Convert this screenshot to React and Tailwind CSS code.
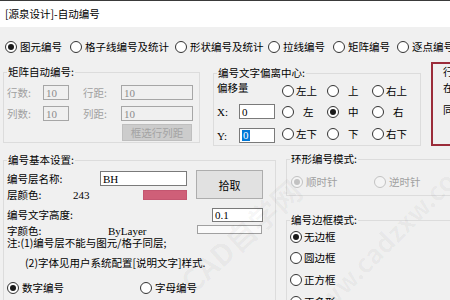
import React from 'react';

// Win10-style dialog: 自动编号
const Radio = ({ checked, disabled }) => (
  <span
    className={`w-[12px] h-[12px] rounded-full border flex items-center justify-center shrink-0 ${
      disabled ? 'border-[#c2c2c2] bg-[#f4f4f4]' : 'border-[#333333] bg-white'
    }`}
  >
    {checked && (
      <span className={`w-[6px] h-[6px] rounded-full ${disabled ? 'bg-[#c2c2c2]' : 'bg-[#1a1a1a]'}`} />
    )}
  </span>
);

const Opt = ({ w, checked, disabled, label, gap = 'gap-[3px]' }) => (
  <div className={`${w} flex items-center ${gap} shrink-0 whitespace-nowrap`}>
    <Radio checked={checked} disabled={disabled} />
    <span className={disabled ? 'text-[#a0a0a0]' : ''}>{label}</span>
  </div>
);

const DisInput = ({ w, v }) => (
  <div className={`${w} h-full border border-[#a6a6a6] bg-[#f0f0f0] pl-[2px] flex items-center font-['Liberation_Serif',serif] text-[11px] text-[#8c8c8c]`}>
    {v}
  </div>
);

const Input = ({ w, children }) => (
  <div className={`${w} h-full border border-[#7a7a7a] bg-white pl-[2px] flex items-center font-['Liberation_Serif',serif] text-[11px] text-black`}>
    {children}
  </div>
);

const Cell = ({ checked, label, wide }) => (
  <div className="w-[45px] flex items-center shrink-0 whitespace-nowrap">
    <Radio checked={checked} />
    <span className={wide ? 'ml-[2px]' : 'ml-[9px]'}>{label}</span>
  </div>
);

export default function App() {
  return (
    <div className="relative w-[450px] h-[300px] overflow-hidden bg-[#f0f0f0] text-black text-[10.5px] leading-[14px] font-['Noto_Sans_CJK_SC',sans-serif]">
      <div className="h-px bg-[#3a3a3a]" />
      <div className="h-[26px] bg-white flex items-center pl-[5px] text-[10.5px]">[源泉设计]-自动编号</div>

      {/* numbering type */}
      <div className="flex items-center h-[14px] mt-[13px] pl-[5px]">
        <Opt w="w-[65px]" checked label="图元编号" />
        <Opt w="w-[105px]" label="格子线编号及统计" />
        <Opt w="w-[93px]" label="形状编号及统计" />
        <Opt w="w-[65px]" label="拉线编号" />
        <Opt w="w-[64px]" label="矩阵编号" />
        <Opt w="w-[60px]" label="逐点编号" />
      </div>

      {/* row 1 */}
      <div className="flex items-start mt-[8px]">
        <fieldset className="ml-[3px] mt-[3px] w-[197px] h-[78px] border border-[#dcdcdc] px-[3px] shrink-0">
          <legend className="px-[1px] leading-[14px]">矩阵自动编号:</legend>
          <div className="flex items-center h-[15px] mt-[6px] text-[#a0a0a0]">
            <span className="w-[36px]">行数:</span>
            <DisInput w="w-[26px]" v="10" />
            <span className="w-[38px] ml-[14px]">行距:</span>
            <DisInput w="w-[72px]" v="10" />
          </div>
          <div className="flex items-center h-[15px] mt-[6px] text-[#a0a0a0]">
            <span className="w-[36px]">列数:</span>
            <DisInput w="w-[26px]" v="10" />
            <span className="w-[38px] ml-[14px]">列距:</span>
            <DisInput w="w-[72px]" v="10" />
          </div>
          <div className="ml-[115px] mt-[3px] w-[70px] h-[17px] bg-[#cccccc] border border-[#bfbfbf] text-[#a3a3a3] flex items-center justify-center">
            框选行列距
          </div>
        </fieldset>

        <fieldset className="ml-[13px] mt-[4px] w-[204px] h-[80px] border border-[#dcdcdc] px-[3px] shrink-0">
          <legend className="px-[1px] leading-[14px]">编号文字偏离中心:</legend>
          <div className="flex">
            <div className="w-[65px] flex flex-col">
              <div className="h-[16px] leading-[16px]">偏移量</div>
              <div className="flex items-center h-[15px] mt-[8px]">
                <span className="w-[22px] font-['Liberation_Serif',serif] text-[11px]">X:</span>
                <Input w="w-[36px]">0</Input>
              </div>
              <div className="flex items-center h-[15px] mt-[9px]">
                <span className="w-[22px] font-['Liberation_Serif',serif] text-[11px]">Y:</span>
                <Input w="w-[36px]">
                  <span className="bg-[#0078d7] text-white px-px leading-[11px]">0</span>
                </Input>
              </div>
            </div>
            <div className="flex flex-col">
              <div className="flex h-[14px] mt-[4px]">
                <Cell wide label="左上" />
                <Cell label="上" />
                <Cell wide label="右上" />
              </div>
              <div className="flex h-[14px] mt-[7px]">
                <Cell label="左" />
                <Cell checked label="中" />
                <Cell label="右" />
              </div>
              <div className="flex h-[14px] mt-[8px]">
                <Cell wide label="左下" />
                <Cell label="下" />
                <Cell wide label="右下" />
              </div>
            </div>
          </div>
        </fieldset>

        <div className="ml-[10px] w-[60px] h-[84px] border-2 border-[#9b2c3a] pl-[10px] leading-[16px] shrink-0">
          <div>行</div>
          <div>在</div>
          <div className="mt-[6px]">同</div>
        </div>
      </div>

      {/* row 2 */}
      <div className="flex items-start mt-[6px]">
        <fieldset className="ml-[3px] mt-[1px] w-[273px] h-[160px] border border-[#dcdcdc] px-[3px] shrink-0">
          <legend className="px-[1px] leading-[14px]">编号基本设置:</legend>
          <div className="flex mt-[3px]">
            <div className="pt-[1px] flex flex-col">
              <div className="flex items-center h-[15px]">
                <span className="w-[93px]">编号层名称:</span>
                <Input w="w-[87px]">BH</Input>
              </div>
              <div className="flex items-center h-[14px] mt-[2px]">
                <span className="w-[66px]">层颜色:</span>
                <span className="w-[70px] font-['Liberation_Serif',serif] text-[11px]">243</span>
                <span className="w-[44px] h-[10px] bg-[#cf5f78] border border-[#c45670]" />
              </div>
            </div>
            <div className="ml-[9px] w-[67px] h-[29px] bg-[#e1e1e1] border border-[#adadad] flex items-center justify-center text-[11px]">
              拾取
            </div>
          </div>
          <div className="flex items-center h-[14px] mt-[6px]">
            <span className="w-[205px]">编号文字高度:</span>
            <Input w="w-[51px]">0.1</Input>
          </div>
          <div className="flex items-start h-[12px] mt-[3px]">
            <span className="w-[101px] leading-[12px]">字颜色:</span>
            <span className="w-[89px] leading-[12px] font-['Liberation_Serif',serif] text-[11px]">ByLayer</span>
            <span className="w-[65px] h-[9px] border border-[#a0a0a0] bg-[#fafafa]" />
          </div>
          <div className="leading-[12px] whitespace-nowrap">注:(1)编号层不能与图元/格子同层;</div>
          <div className="mt-[7px] pl-[18px] whitespace-nowrap">(2)字体见用户系统配置[说明文字]样式.</div>
          <div className="flex items-center h-[14px] mt-[11px]">
            <Opt w="w-[133px]" checked label="数字编号" />
            <Opt w="w-[80px]" label="字母编号" />
          </div>
        </fieldset>

        <div className="ml-[10px] w-[170px] flex flex-col shrink-0">
          <fieldset className="w-full h-[44px] border border-[#dcdcdc] px-[3px]">
            <legend className="px-[1px] leading-[14px]">环形编号模式:</legend>
            <div className="flex items-center h-[14px] mt-[9px] ml-[1px]">
              <Opt w="w-[83px]" disabled checked label="顺时针" />
              <Opt w="w-[70px]" disabled label="逆时针" />
            </div>
          </fieldset>
          <fieldset className="mt-[17px] w-full h-[120px] border border-[#dcdcdc] px-[3px]">
            <legend className="px-[1px] leading-[14px]">编号边框模式:</legend>
            <div className="flex items-center h-[14px] mt-[3px]">
              <Opt w="w-[80px]" gap="gap-[2px]" checked label="无边框" />
            </div>
            <div className="flex items-center h-[14px] mt-[7px]">
              <Opt w="w-[80px]" gap="gap-[2px]" label="圆边框" />
            </div>
            <div className="flex items-center h-[14px] mt-[8px]">
              <Opt w="w-[80px]" gap="gap-[2px]" label="正方框" />
            </div>
            <div className="flex items-center h-[14px] mt-[8px]">
              <Opt w="w-[80px]" gap="gap-[2px]" label="正多形" />
            </div>
          </fieldset>
        </div>
      </div>

      {/* watermark */}
      <span className="pointer-events-none absolute left-[165px] top-[228px] -rotate-[42deg] whitespace-nowrap text-[30px] font-bold text-black/[0.035]">
        CAD自学网
      </span>
      <span className="pointer-events-none absolute left-[272px] top-[232px] -rotate-[45deg] whitespace-nowrap text-[26px] font-bold text-black/[0.035]">
        www.cadzxw.com
      </span>
    </div>
  );
}
